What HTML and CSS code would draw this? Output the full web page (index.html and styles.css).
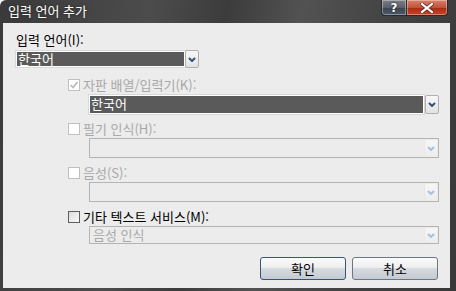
FILE: index.html
```html
<!DOCTYPE html>
<html lang="ko">
<head>
    <meta charset="UTF-8">
    <title>입력 언어 추가</title>
    <link rel="stylesheet" href="styles.css">
</head>
<body>
    <div class="window">
        <div class="titlebar">
            <span class="title">입력 언어 추가</span>
            <div class="caption-buttons">
                <div class="cap help">?</div>
                <div class="cap close">
                    <svg width="14" height="10" viewBox="0 0 14 10">
                        <path d="M2 1 L12 9 M12 1 L2 9" stroke="#5a2a20" stroke-width="3.6" stroke-linecap="square"/>
                        <path d="M2 1 L12 9 M12 1 L2 9" stroke="#fff" stroke-width="2.2" stroke-linecap="square"/>
                    </svg>
                </div>
            </div>
        </div>

        <div class="client">
            <div class="label">입력 언어(I):</div>
            <div class="combo combo-main">
                <div class="field selected">한국어</div>
                <div class="arrow">
                    <svg width="8" height="5" viewBox="0 0 8 5"><path d="M1 1 L4 4 L7 1" fill="none" stroke="#34507e" stroke-width="2"/></svg>
                </div>
            </div>

            <div class="check-row disabled first">
                <span class="box">
                    <svg width="10" height="10" viewBox="0 0 10 10"><path d="M1.5 5 L4 7.5 L8.5 2" fill="none" stroke="#b8b8b8" stroke-width="1.6"/></svg>
                </span>
                <span>자판 배열/입력기(K):</span>
            </div>
            <div class="combo combo-active">
                <div class="field selected">한국어</div>
                <div class="arrow">
                    <svg width="8" height="5" viewBox="0 0 8 5"><path d="M1 1 L4 4 L7 1" fill="none" stroke="#34507e" stroke-width="2"/></svg>
                </div>
            </div>

            <div class="check-row disabled">
                <span class="box"></span>
                <span>필기 인식(H):</span>
            </div>
            <div class="combo combo-off tall">
                <div class="field"></div>
                <div class="arrow">
                    <svg width="8" height="5" viewBox="0 0 8 5"><path d="M1 1 L4 4 L7 1" fill="none" stroke="#a9c0dc" stroke-width="2"/></svg>
                </div>
            </div>

            <div class="check-row disabled">
                <span class="box"></span>
                <span>음성(S):</span>
            </div>
            <div class="combo combo-off tall">
                <div class="field"></div>
                <div class="arrow">
                    <svg width="8" height="5" viewBox="0 0 8 5"><path d="M1 1 L4 4 L7 1" fill="none" stroke="#a9c0dc" stroke-width="2"/></svg>
                </div>
            </div>

            <div class="check-row enabled">
                <span class="box"></span>
                <span>기타 텍스트 서비스(M):</span>
            </div>
            <div class="combo combo-off">
                <div class="field">음성 인식</div>
                <div class="arrow">
                    <svg width="8" height="5" viewBox="0 0 8 5"><path d="M1 1 L4 4 L7 1" fill="none" stroke="#a9c0dc" stroke-width="2"/></svg>
                </div>
            </div>

            <div class="buttons">
                <div class="btn default">확인</div>
                <div class="btn">취소</div>
            </div>
        </div>
    </div>
</body>
</html>
```

FILE: styles.css
```css
body {
    margin: 0;
    font-family: "Noto Sans CJK KR", "Noto Sans", sans-serif;
    font-size: 13px;
    background-color: #fff;
}

.window {
    width: 456px;
    height: 291px;
    background: linear-gradient(100deg, #3a3a3a 0%, #4c4c4c 30%, #3c3c3c 45%, #525252 60%, #414141 80%, #393939 100%);
    display: flex;
    flex-direction: column;
    border-top-left-radius: 6px;
    overflow: hidden;
}

.titlebar {
    height: 23px;
    display: flex;
    align-items: flex-start;
    flex-shrink: 0;
}

.title {
    color: #fff;
    padding-left: 8px;
    line-height: 22px;
    font-size: 13px;
    text-shadow: 0 0 3px #222;
}

.caption-buttons {
    margin-left: auto;
    margin-right: 8px;
    display: flex;
}

.cap {
    height: 15px;
    border: 1px solid #2a2a2a;
    border-top: none;
    display: flex;
    align-items: center;
    justify-content: center;
    box-shadow: inset 0 0 0 1px rgba(255, 255, 255, 0.35);
}

.help {
    width: 24px;
    border-bottom-left-radius: 4px;
    background: linear-gradient(#7a7f86, #5a6069 50%, #3c4450 51%, #4a5a6a);
    color: #fff;
    font-family: "DejaVu Sans", sans-serif;
    font-weight: bold;
    font-size: 12px;
    text-shadow: 0 0 2px #000;
    border-right: none;
}

.close {
    width: 40px;
    border-bottom-right-radius: 4px;
    background: linear-gradient(#d7826c, #c4513a 50%, #a82a10 51%, #c8442a);
}

.client {
    flex: 1;
    margin: 0 6px 3px 3px;
    background-color: #ececec;
    padding: 10px 11px 0 13px;
    display: flex;
    flex-direction: column;
    color: #000;
}

.label {
    line-height: 14px;
    height: 14px;
}

.combo {
    display: flex;
    margin-left: 73px;
}

.combo-main {
    margin-left: 0;
    margin-top: 4px;
    width: 183px;
    height: 16px;
}

.field {
    flex: 1;
    box-sizing: border-box;
    line-height: 14px;
    padding-left: 3px;
    color: #a8a8a8;
}

.field.selected {
    background-color: #5a5a5a;
    color: #fff;
    border: 1px solid #fff;
    outline: 1px solid #d8d8d8;
    padding-left: 1px;
}

.arrow {
    width: 14px;
    box-sizing: border-box;
    display: flex;
    align-items: center;
    justify-content: center;
    background: linear-gradient(#f8f8f8, #e2e2e2);
    border: 1px solid #b0b0b0;
    border-radius: 2px;
}

.combo-main .arrow {
    margin-top: -1px;
    height: 18px;
}

.combo-active {
    margin-top: 3px;
    height: 19px;
}

.combo-active .field {
    line-height: 15px;
}

.combo-active .arrow {
    margin-left: 1px;
}

.combo-off {
    margin-top: 2px;
    height: 18px;
    border: 1px solid #b4b4b4;
    box-sizing: border-box;
}

.combo-off.tall {
    height: 20px;
}

.combo-off .field {
    line-height: 16px;
}

.combo-off .arrow {
    border: none;
    border-left: 1px solid #e8e8e8;
    background: linear-gradient(#f6f6f6, #ededed);
    width: 13px;
    margin: 1px;
}

.check-row {
    display: flex;
    align-items: center;
    gap: 3px;
    height: 14px;
    margin-top: 8px;
    margin-left: 52px;
    line-height: 14px;
}

.check-row.first {
    margin-top: 11px;
}

.check-row.disabled {
    color: #a8a8a8;
}

.check-row + .combo-off.tall {
    margin-top: 2px;
}

.box {
    width: 12px;
    height: 12px;
    box-sizing: border-box;
    border: 1px solid #c0c0c0;
    background-color: #fff;
    display: flex;
    align-items: center;
    justify-content: center;
}

.enabled .box {
    border-color: #5e5e5e;
    background: linear-gradient(135deg, #dcdcdc, #fafafa);
}

.buttons {
    display: flex;
    justify-content: flex-end;
    gap: 6px;
    margin-top: 13px;
    margin-right: 1px;
}

.btn {
    width: 86px;
    height: 23px;
    box-sizing: border-box;
    border: 1px solid #6f7683;
    border-radius: 3px;
    background: linear-gradient(#fbfbfb, #eeeeee 45%, #d6dbe0 50%, #c3cad1);
    display: flex;
    align-items: center;
    justify-content: center;
    line-height: 14px;
}

.btn.default {
    border-color: #3c5474;
}
```
